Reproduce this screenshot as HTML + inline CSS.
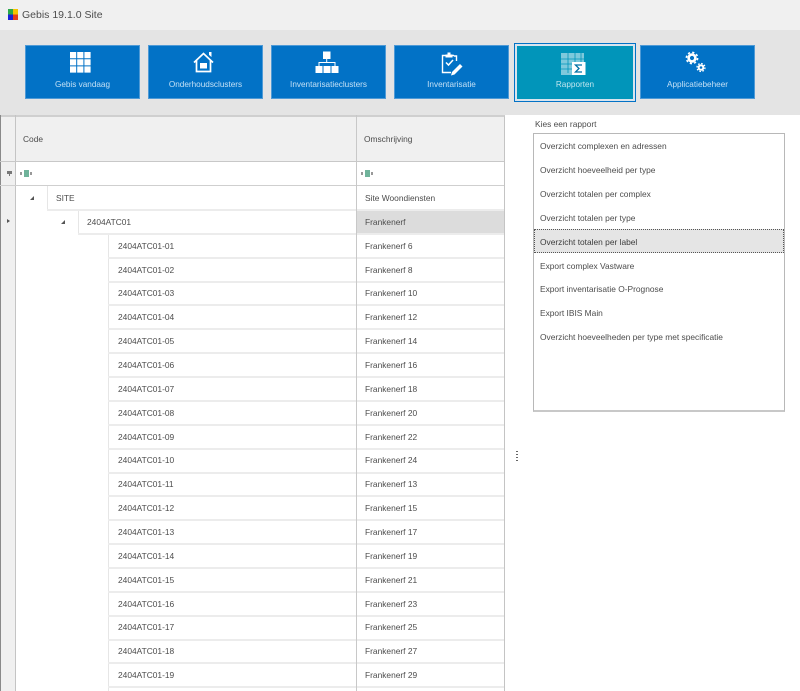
<!DOCTYPE html>
<html lang="nl"><head><meta charset="utf-8"><title>Gebis 19.1.0 Site</title>
<style>
html,body{margin:0;padding:0;background:#fff}
#p{position:relative;width:800px;height:691px;overflow:hidden;background:#fff;font-family:"Liberation Sans",sans-serif;font-size:8.4px;color:#4c4c4c;filter:blur(.35px)}
#p div{position:absolute;box-sizing:border-box}
.t{white-space:nowrap;line-height:12px;height:12px}
.b{background:#0272c6;top:45px;height:54px;width:115px;border:1px solid #4f9ad6;color:#c3e0f5;text-align:center;font-size:8.2px;line-height:12px;padding-top:33px}
.l{height:2px;background:#ececec;left:47px;width:457px}
.tl{left:118px}
.ti{left:540px}
</style></head><body>
<div id="p">
<div style="left:0;top:0;width:800px;height:30px;background:#f0f0f0"></div>
<div style="left:0;top:30px;width:800px;height:85px;background:#e4e4e4"></div>
<div style="left:8px;top:9px;width:10px;height:11px;background:conic-gradient(#f5c400 25%,#e43b1c 0 50%,#1a20d8 0 75%,#2aa84a 0)"></div>
<div class="t" style="left:22px;top:9px;font-size:10.5px;color:#4c4c4c">Gebis 19.1.0 Site</div>

<div class="b" style="left:25px">Gebis vandaag</div>
<div class="b" style="left:148px">Onderhoudsclusters</div>
<div class="b" style="left:271px">Inventarisatieclusters</div>
<div class="b" style="left:394px">Inventarisatie</div>
<div style="left:514px;top:43px;width:122px;height:59px;border:1px solid #0272c6;background:#d8e4ee"></div>
<div class="b" style="left:517px;top:46px;width:116px;height:53px;background:#0195ba;border:0;color:#c0e6ef;padding-top:33px">Rapporten</div>
<div class="b" style="left:640px">Applicatiebeheer</div>

<svg style="position:absolute;left:0;top:0" width="800" height="115" viewBox="0 0 800 115">
<path d="M70 52h6.200v6.200H70zM77.200 52h6.200v6.200h-6.200zM84.400 52h6.200v6.200h-6.200zM70 59.200h6.200v6.200H70zM77.200 59.200h6.200v6.200h-6.200zM84.400 59.200h6.200v6.200h-6.200zM70 66.400h6.200v6.200H70zM77.200 66.400h6.200v6.200h-6.200zM84.400 66.400h6.200v6.200h-6.200z" fill="#fff"/>
<path d="M194 62.500 203.500 53.500 213 62.500M196.500 60.500v11h14v-11" fill="none" stroke="#fff" stroke-width="1.700"/><path d="M209 52h2.500v5L209 55zM200 63h7v5.500h-7z" fill="#fff"/>
<path d="M323 51.500h7.500v7.500H323zM315.500 66h7v7h-7zM323.500 66h7v7h-7zM331.500 66h7v7h-7z" fill="#fff"/><path d="M326.700 59v3.500M319 66v-3.500h16V66" fill="none" stroke="#fff"/>
<path d="M454 56h2.500v5M451 72.500h-8.500V55.500h3.500M452 55.500h2" fill="none" stroke="#fff" stroke-width="1.400"/><path d="M445.500 54.500h2v-2h3v2h2v3h-7z" fill="#fff"/><path d="M446 62.500l2.500 2.500 4.500-5" fill="none" stroke="#fff" stroke-width="1.500"/><path d="M452 72l8-8 2.500 2.500-8 8-3.500 1z" fill="#fff"/>
<path d="M561 53h23v12h-7v10h-16z" fill="#e6f4f8" opacity=".55"/><path d="M561 59h23M561 64h17M561 69h13M568 53v20M575 53v12M581 53v10" stroke="#0195ba" stroke-width=".8"/><path d="M572 62h13.500v13H572z" fill="#fff"/><path d="M582 65h-6.500l3.500 3.500-3.500 3.500h6.500" fill="none" stroke="#0272a6" stroke-width="1.300"/>
<g fill="none" stroke="#fff"><circle cx="692" cy="58" r="3.400" stroke-width="2.600"/><circle cx="692" cy="58" r="5.600" stroke-width="1.600" stroke-dasharray="2.200 2.200"/><circle cx="701" cy="67.500" r="2.300" stroke-width="2"/><circle cx="701" cy="67.500" r="4" stroke-width="1.300" stroke-dasharray="1.600 1.540"/></g>
</svg>

<div style="left:0;top:115px;width:505px;height:576px;border-right:1px solid #c4c4c4;border-top:2px solid #cfcfcf"></div>
<div style="left:0;top:117px;width:15px;height:574px;background:#f0f0f0"></div>
<div style="left:15px;top:117px;width:489px;height:44px;background:#f0f0f0"></div>
<div style="left:15px;top:115px;width:1px;height:576px;background:#c4c4c4"></div>
<div style="left:0;top:115px;width:1px;height:576px;background:#8a8a8a"></div>
<div style="left:0;top:161px;width:504px;height:1px;background:#c8c8c8"></div>
<div style="left:0;top:185px;width:504px;height:1px;background:#cfcfcf"></div>
<div style="left:16px;top:162px;width:488px;height:23px;background:#fff"></div>
<div class="t" style="left:23px;top:133px">Code</div>
<div class="t" style="left:364px;top:133px">Omschrijving</div>
<div style="left:7px;top:171px;width:5px;height:3px;background:#777"></div>
<div style="left:9px;top:173px;width:1px;height:3px;background:#777"></div>
<div style="left:7px;top:219px;border-left:3px solid #555;border-top:2.500px solid transparent;border-bottom:2.500px solid transparent"></div>
<div style="left:24px;top:170px;width:5px;height:7px;background:#6fb39a"></div><div style="left:20px;top:172px;width:2px;height:3px;background:#999"></div><div style="left:30px;top:172px;width:2px;height:3px;background:#999"></div>
<div style="left:365px;top:170px;width:5px;height:7px;background:#6fb39a"></div><div style="left:361px;top:172px;width:2px;height:3px;background:#999"></div><div style="left:371px;top:172px;width:2px;height:3px;background:#999"></div>

<div style="left:357px;top:210px;width:147px;height:23px;background:#dcdcdc"></div>
<div style="left:47px;top:186px;width:1px;height:24px;background:#e6e6e6"></div>
<div style="left:78px;top:210px;width:1px;height:24px;background:#e6e6e6"></div>
<div style="left:108px;top:234px;width:1px;height:457px;background:#e6e6e6"></div>
<div style="left:30px;top:196px;border-right:4px solid #555;border-top:4px solid transparent"></div>
<div style="left:61px;top:220px;border-right:4px solid #555;border-top:4px solid transparent"></div>

<div class="l" style="top:209px"></div>
<div class="l" style="top:233px;left:78px;width:426px"></div>
<div class="l" style="top:257px;left:108px;width:396px"></div><div class="l" style="top:281px;left:108px;width:396px"></div><div class="l" style="top:304px;left:108px;width:396px"></div><div class="l" style="top:328px;left:108px;width:396px"></div><div class="l" style="top:352px;left:108px;width:396px"></div><div class="l" style="top:376px;left:108px;width:396px"></div><div class="l" style="top:400px;left:108px;width:396px"></div><div class="l" style="top:424px;left:108px;width:396px"></div><div class="l" style="top:448px;left:108px;width:396px"></div><div class="l" style="top:472px;left:108px;width:396px"></div><div class="l" style="top:495px;left:108px;width:396px"></div><div class="l" style="top:519px;left:108px;width:396px"></div><div class="l" style="top:543px;left:108px;width:396px"></div><div class="l" style="top:567px;left:108px;width:396px"></div><div class="l" style="top:591px;left:108px;width:396px"></div><div class="l" style="top:615px;left:108px;width:396px"></div><div class="l" style="top:639px;left:108px;width:396px"></div><div class="l" style="top:662px;left:108px;width:396px"></div><div class="l" style="top:686px;left:108px;width:396px"></div>
<div style="left:356px;top:115px;width:1px;height:576px;background:#c8c8c8"></div>

<div class="t" style="left:56px;top:192px">SITE</div><div class="t" style="left:365px;top:192px">Site Woondiensten</div>
<div class="t" style="left:87px;top:216px">2404ATC01</div><div class="t" style="left:365px;top:216px">Frankenerf</div>
<div class="t tl" style="top:240px">2404ATC01-01</div><div class="t" style="left:365px;top:240px">Frankenerf 6</div>
<div class="t tl" style="top:264px">2404ATC01-02</div><div class="t" style="left:365px;top:264px">Frankenerf 8</div>
<div class="t tl" style="top:287px">2404ATC01-03</div><div class="t" style="left:365px;top:287px">Frankenerf 10</div>
<div class="t tl" style="top:311px">2404ATC01-04</div><div class="t" style="left:365px;top:311px">Frankenerf 12</div>
<div class="t tl" style="top:335px">2404ATC01-05</div><div class="t" style="left:365px;top:335px">Frankenerf 14</div>
<div class="t tl" style="top:359px">2404ATC01-06</div><div class="t" style="left:365px;top:359px">Frankenerf 16</div>
<div class="t tl" style="top:383px">2404ATC01-07</div><div class="t" style="left:365px;top:383px">Frankenerf 18</div>
<div class="t tl" style="top:407px">2404ATC01-08</div><div class="t" style="left:365px;top:407px">Frankenerf 20</div>
<div class="t tl" style="top:431px">2404ATC01-09</div><div class="t" style="left:365px;top:431px">Frankenerf 22</div>
<div class="t tl" style="top:454px">2404ATC01-10</div><div class="t" style="left:365px;top:454px">Frankenerf 24</div>
<div class="t tl" style="top:478px">2404ATC01-11</div><div class="t" style="left:365px;top:478px">Frankenerf 13</div>
<div class="t tl" style="top:502px">2404ATC01-12</div><div class="t" style="left:365px;top:502px">Frankenerf 15</div>
<div class="t tl" style="top:526px">2404ATC01-13</div><div class="t" style="left:365px;top:526px">Frankenerf 17</div>
<div class="t tl" style="top:550px">2404ATC01-14</div><div class="t" style="left:365px;top:550px">Frankenerf 19</div>
<div class="t tl" style="top:574px">2404ATC01-15</div><div class="t" style="left:365px;top:574px">Frankenerf 21</div>
<div class="t tl" style="top:598px">2404ATC01-16</div><div class="t" style="left:365px;top:598px">Frankenerf 23</div>
<div class="t tl" style="top:621px">2404ATC01-17</div><div class="t" style="left:365px;top:621px">Frankenerf 25</div>
<div class="t tl" style="top:645px">2404ATC01-18</div><div class="t" style="left:365px;top:645px">Frankenerf 27</div>
<div class="t tl" style="top:669px">2404ATC01-19</div><div class="t" style="left:365px;top:669px">Frankenerf 29</div>

<div class="t" style="left:535px;top:118px">Kies een rapport</div>
<div style="left:533px;top:133px;width:252px;height:279px;border:1px solid #b8b8b8;border-bottom:2px solid #c8c8c8;background:#fff"></div>
<div style="left:534px;top:229px;width:250px;height:24px;background:#e5e5e5;border:1px dotted #555"></div>
<div class="t ti" style="top:140px">Overzicht complexen en adressen</div>
<div class="t ti" style="top:164px">Overzicht hoeveelheid per type</div>
<div class="t ti" style="top:188px">Overzicht totalen per complex</div>
<div class="t ti" style="top:212px">Overzicht totalen per type</div>
<div class="t ti" style="top:236px;color:#3c3c3c">Overzicht totalen per label</div>
<div class="t ti" style="top:260px">Export complex Vastware</div>
<div class="t ti" style="top:283px">Export inventarisatie O-Prognose</div>
<div class="t ti" style="top:307px">Export IBIS Main</div>
<div class="t ti" style="top:331px">Overzicht hoeveelheden per type met specificatie</div>
<div style="left:516px;top:451px;width:2px;height:12px;background:repeating-linear-gradient(#666 0 1px,transparent 1px 3px)"></div>
</div>
</body></html>
